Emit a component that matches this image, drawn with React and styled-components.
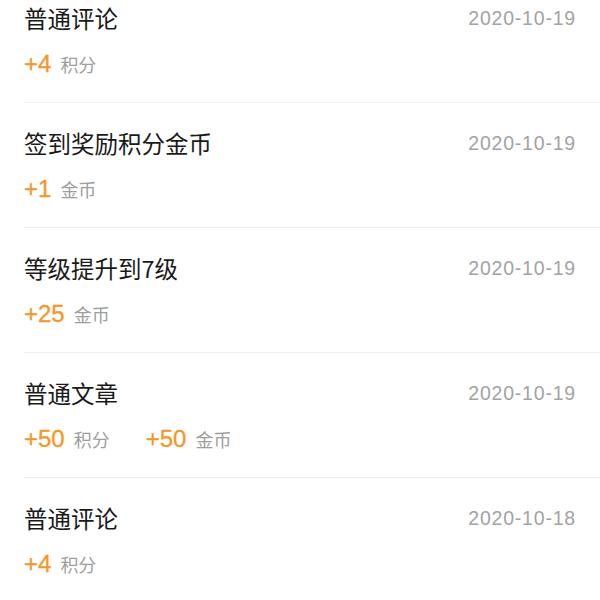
import React from 'react';
import styled, { createGlobalStyle } from 'styled-components';

const GlobalStyle = createGlobalStyle`
  html, body {
    margin: 0;
    padding: 0;
    background: #ffffff;
    overflow: hidden;
  }
  body {
    font-family: "Liberation Sans", "Noto Sans CJK SC", sans-serif;
  }
`;

const Page = styled.div`
  width: 600px;
  height: 600px;
  overflow: hidden;
  background: #ffffff;
`;

const RecordList = styled.ul`
  list-style: none;
  margin: -22px 0 0 0;
  padding: 0;
`;

const RecordItem = styled.li`
  margin-left: 24px;
  padding: 24px 24px 23px 0;
  border-bottom: 1px solid #efefef;
  display: flex;
  flex-direction: column;
  gap: 15px;
`;

const TopLine = styled.div`
  display: flex;
  align-items: center;
  justify-content: space-between;
  height: 32px;
`;

const Title = styled.span`
  font-family: "Noto Sans CJK SC", sans-serif;
  font-size: 23.5px;
  line-height: 32px;
  color: #1a1a1a;
`;

const DateText = styled.span`
  font-family: "Liberation Sans", sans-serif;
  font-size: 19.5px;
  line-height: 32px;
  letter-spacing: 0.8px;
  color: #a3a3a3;
`;

const RewardLine = styled.div`
  display: flex;
  align-items: center;
  height: 30px;
  gap: 36px;
`;

const Reward = styled.span`
  display: inline-flex;
  align-items: center;
  gap: 9px;
`;

const Amount = styled.span`
  font-family: "Liberation Sans", sans-serif;
  font-size: 24px;
  line-height: 30px;
  color: #f5962a;
  -webkit-text-stroke: 0.3px #f5962a;
`;

const Unit = styled.span`
  font-family: "Noto Sans CJK SC", sans-serif;
  font-size: 18px;
  line-height: 30px;
  color: #9e9e9e;
`;

const records = [
  { id: 1, title: '普通评论', date: '2020-10-19', rewards: [{ amount: 4, unit: '积分' }] },
  { id: 2, title: '签到奖励积分金币', date: '2020-10-19', rewards: [{ amount: 1, unit: '金币' }] },
  { id: 3, title: '等级提升到7级', date: '2020-10-19', rewards: [{ amount: 25, unit: '金币' }] },
  {
    id: 4,
    title: '普通文章',
    date: '2020-10-19',
    rewards: [
      { amount: 50, unit: '积分' },
      { amount: 50, unit: '金币' },
    ],
  },
  { id: 5, title: '普通评论', date: '2020-10-18', rewards: [{ amount: 4, unit: '积分' }] },
];

const App = () => {
  return (
    <Page>
      <GlobalStyle />
      <RecordList>
        {records.map((record) => (
          <RecordItem key={record.id}>
            <TopLine>
              <Title>{record.title}</Title>
              <DateText>{record.date}</DateText>
            </TopLine>
            <RewardLine>
              {record.rewards.map((reward) => (
                <Reward key={reward.unit}>
                  <Amount>+{reward.amount}</Amount>
                  <Unit>{reward.unit}</Unit>
                </Reward>
              ))}
            </RewardLine>
          </RecordItem>
        ))}
      </RecordList>
    </Page>
  );
};

export default App;
